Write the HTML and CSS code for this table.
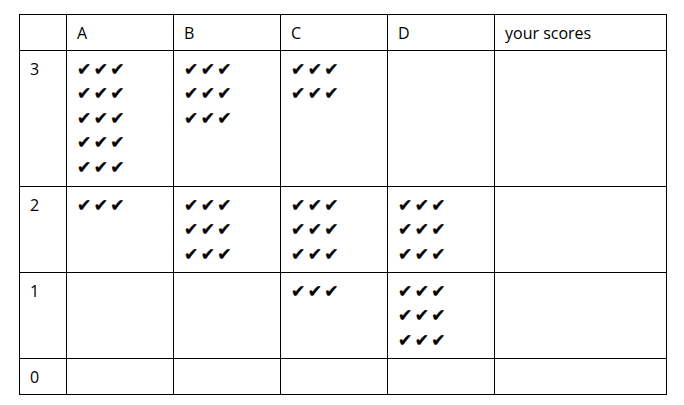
FILE: index.html
```html
<!DOCTYPE html>
<html>
<head>
<meta charset="utf-8">
<link rel="stylesheet" href="styles.css">
</head>
<body>
<div class="wrap">
<table class="grid">
  <colgroup>
    <col class="c0"><col class="c1"><col class="c1"><col class="c1"><col class="c1"><col class="c5">
  </colgroup>
  <tr class="r-head">
    <td></td><td>A</td><td>B</td><td>C</td><td>D</td><td>your scores</td>
  </tr>
  <tr class="r-3">
    <td>3</td>
    <td><div class="ck">✔ ✔ ✔</div><div class="ck">✔ ✔ ✔</div><div class="ck">✔ ✔ ✔</div><div class="ck">✔ ✔ ✔</div><div class="ck">✔ ✔ ✔</div></td>
    <td><div class="ck">✔ ✔ ✔</div><div class="ck">✔ ✔ ✔</div><div class="ck">✔ ✔ ✔</div></td>
    <td><div class="ck">✔ ✔ ✔</div><div class="ck">✔ ✔ ✔</div></td>
    <td></td>
    <td></td>
  </tr>
  <tr class="r-mid">
    <td>2</td>
    <td><div class="ck">✔ ✔ ✔</div></td>
    <td><div class="ck">✔ ✔ ✔</div><div class="ck">✔ ✔ ✔</div><div class="ck">✔ ✔ ✔</div></td>
    <td><div class="ck">✔ ✔ ✔</div><div class="ck">✔ ✔ ✔</div><div class="ck">✔ ✔ ✔</div></td>
    <td><div class="ck">✔ ✔ ✔</div><div class="ck">✔ ✔ ✔</div><div class="ck">✔ ✔ ✔</div></td>
    <td></td>
  </tr>
  <tr class="r-mid">
    <td>1</td>
    <td></td>
    <td></td>
    <td><div class="ck">✔ ✔ ✔</div></td>
    <td><div class="ck">✔ ✔ ✔</div><div class="ck">✔ ✔ ✔</div><div class="ck">✔ ✔ ✔</div></td>
    <td></td>
  </tr>
  <tr class="r-head">
    <td>0</td><td></td><td></td><td></td><td></td><td></td>
  </tr>
</table>
</div>
</body>
</html>
```
FILE: styles.css
```css
html, body {
  margin: 0;
  padding: 0;
  background: #ffffff;
}
.wrap {
  padding: 14px 0 0 19px;
}
.grid {
  border-collapse: collapse;
  table-layout: fixed;
  width: 648px;
  font-family: "Open Sans", "DejaVu Sans", sans-serif;
  font-size: 16px;
  color: #000;
}
.c0 { width: 47px; }
.c1 { width: 107px; }
.c5 { width: 172px; }
.grid td {
  border: 1px solid #000;
  vertical-align: top;
  padding: 7px 10px 0 10px;
  line-height: 22px;
}
.r-head td { height: 36px; box-sizing: border-box; }
.r-3 td { height: 136px; box-sizing: border-box; }
.r-mid td { height: 86px; box-sizing: border-box; }
.ck {
  font-family: "DejaVu Sans", sans-serif;
  font-size: 17px;
  line-height: 24.4px;
  word-spacing: -3px;
  white-space: nowrap;
  -webkit-text-stroke: 0.4px #000;
}
.r-3 td .ck:first-child, .r-mid td .ck:first-child { margin-top: -1px; }
```
